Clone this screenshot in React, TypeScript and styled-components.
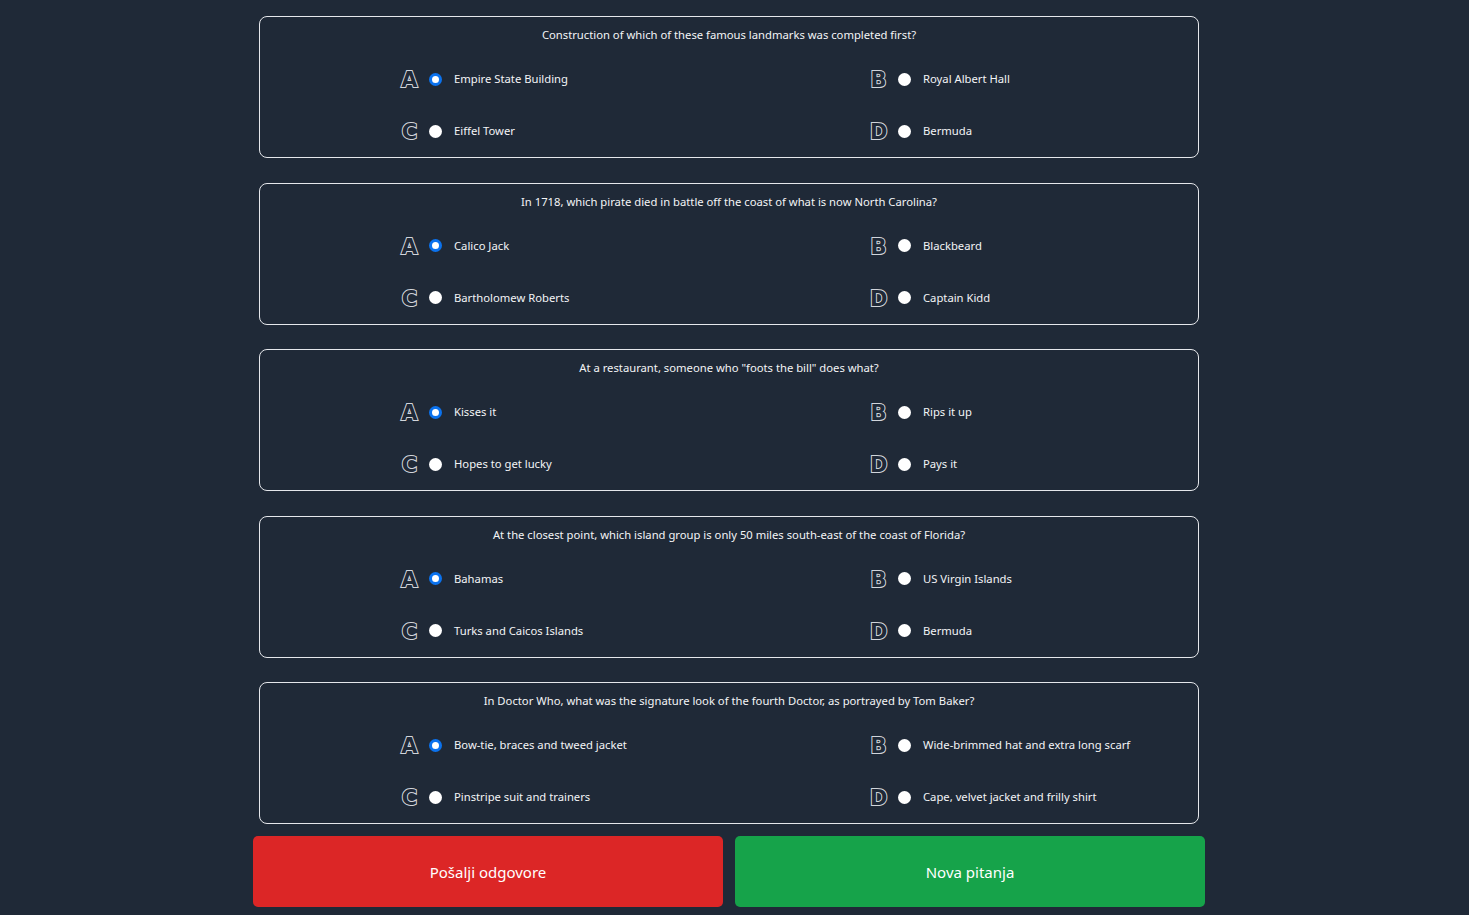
import React from 'react';
import styled, { createGlobalStyle } from 'styled-components';

const GlobalStyle = createGlobalStyle`
  html, body {
    margin: 0;
    padding: 0;
    background: #1f2937;
  }
  body {
    font-family: 'Noto Sans', 'Open Sans', sans-serif;
    color: #f3f4f6;
  }
`;

const Page = styled.div`
  min-height: 915px;
  box-sizing: border-box;
  padding: 16px 11px 8px 0;
`;

const Container = styled.div`
  width: 952px;
  margin: 0 auto;
  display: flex;
  flex-direction: column;
  gap: 24.5px;
`;

const Card = styled.div`
  margin: 0 6px;
  border: 1px solid #e5e7eb;
  border-radius: 8px;
  padding-top: 9px;
  display: flex;
  flex-direction: column;
  gap: 9px;
`;

const Question = styled.div`
  text-align: center;
  font-size: 11.25px;
  line-height: 18px;
  color: #f3f4f6;
`;

const Options = styled.div`
  display: grid;
  grid-template-columns: 1fr 1fr;
  grid-auto-rows: 52px;
`;

const Option = styled.label`
  display: flex;
  align-items: center;
  padding-left: 141px;
  font-size: 11.25px;
  line-height: 16px;
  color: #f3f4f6;
`;

// hollow capital used as the option marker
const Letter = styled.span`
  width: 17px;
  padding-top: 2px;
  font-size: 21px;
  line-height: 20px;
  font-weight: 700;
  font-family: 'DejaVu Sans', sans-serif;
  color: #1f2937;
  -webkit-text-stroke: 2px #d1d5db;
  paint-order: stroke fill;
  text-align: center;
`;

const Radio = styled.input.attrs({ type: 'radio' })`
  appearance: none;
  margin: 0 12px 0 11px;
  width: 13px;
  height: 13px;
  border-radius: 50%;
  background: #ffffff;
  box-sizing: border-box;
  &:checked {
    border: 3.5px solid #0b72ee;
  }
`;

const Actions = styled.div`
  display: grid;
  grid-template-columns: 1fr 1fr;
  gap: 12px;
  margin-top: -12.5px;
`;

const ActionButton = styled.button<{ $tone: 'red' | 'green' }>`
  height: 71px;
  border: none;
  border-radius: 5px;
  background: ${(p) => (p.$tone === 'red' ? '#dc2626' : '#16a34a')};
  color: #ffffff;
  font-family: 'Noto Sans', 'Open Sans', sans-serif;
  font-size: 15px;
  cursor: pointer;
`;

type Q = { text: string; answers: [string, string, string, string] };

const questions: Q[] = [
  {
    text: 'Construction of which of these famous landmarks was completed first?',
    answers: ['Empire State Building', 'Royal Albert Hall', 'Eiffel Tower', 'Bermuda'],
  },
  {
    text: 'In 1718, which pirate died in battle off the coast of what is now North Carolina?',
    answers: ['Calico Jack', 'Blackbeard', 'Bartholomew Roberts', 'Captain Kidd'],
  },
  {
    text: 'At a restaurant, someone who "foots the bill" does what?',
    answers: ['Kisses it', 'Rips it up', 'Hopes to get lucky', 'Pays it'],
  },
  {
    text: 'At the closest point, which island group is only 50 miles south-east of the coast of Florida?',
    answers: ['Bahamas', 'US Virgin Islands', 'Turks and Caicos Islands', 'Bermuda'],
  },
  {
    text: 'In Doctor Who, what was the signature look of the fourth Doctor, as portrayed by Tom Baker?',
    answers: [
      'Bow-tie, braces and tweed jacket',
      'Wide-brimmed hat and extra long scarf',
      'Pinstripe suit and trainers',
      'Cape, velvet jacket and frilly shirt',
    ],
  },
];

const letters = ['A', 'B', 'C', 'D'];

export default function App() {
  return (
    <Page>
      <GlobalStyle />
      <Container>
        {questions.map((q, qi) => (
          <Card key={qi}>
            <Question>{q.text}</Question>
            <Options>
              {q.answers.map((a, ai) => (
                <Option key={ai}>
                  <Letter>{letters[ai]}</Letter>
                  <Radio name={`q${qi}`} defaultChecked={ai === 0} />
                  {a}
                </Option>
              ))}
            </Options>
          </Card>
        ))}
        <Actions>
          <ActionButton $tone="red">Pošalji odgovore</ActionButton>
          <ActionButton $tone="green">Nova pitanja</ActionButton>
        </Actions>
      </Container>
    </Page>
  );
}
